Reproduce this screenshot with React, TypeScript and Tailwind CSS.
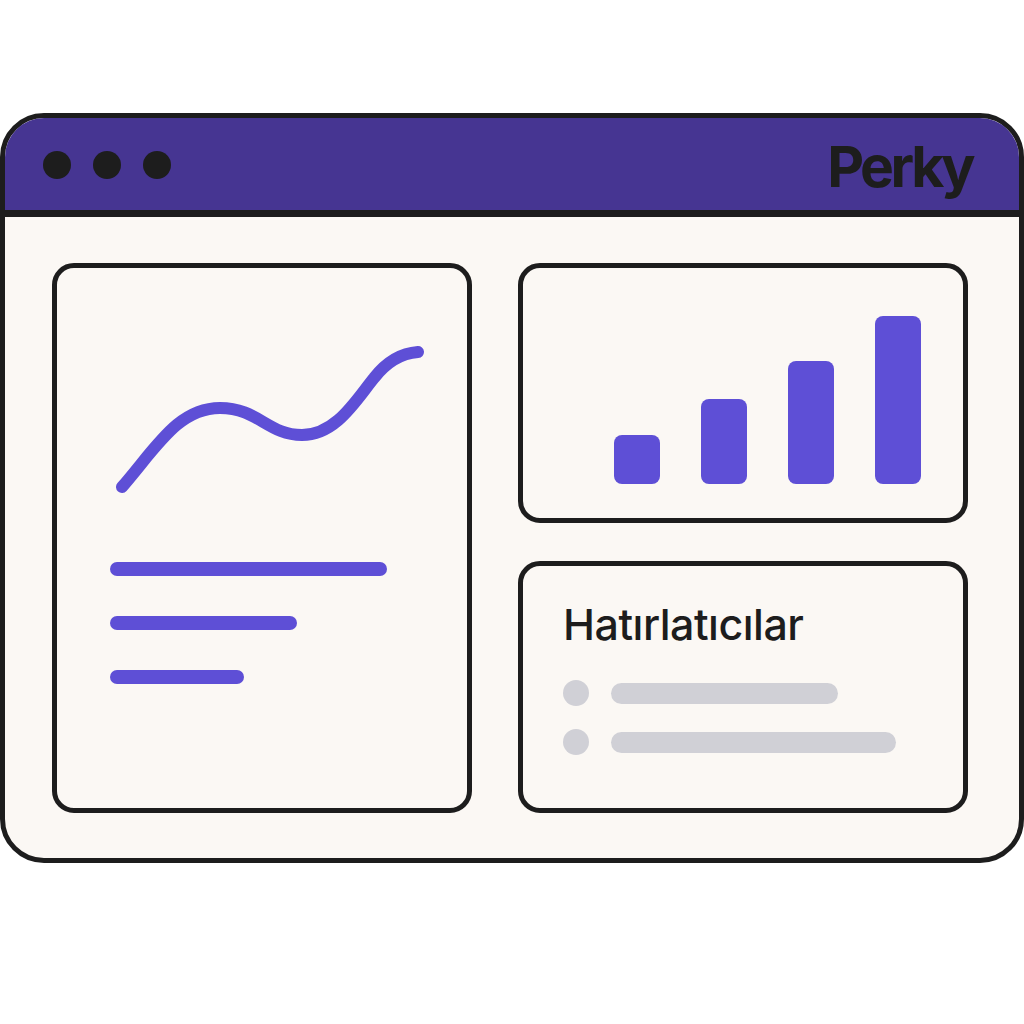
import React from "react";

export default function App() {
  return (
    <div className="w-[1024px] h-[1024px] bg-white pt-[113px]" style={{ fontFamily: "Inter, 'Noto Sans', sans-serif" }}>
      <div className="w-[1024px] h-[750px] border-[5px] border-[#1d1d1d] rounded-[44px] overflow-hidden bg-[#fbf8f4] flex flex-col">
        <div className="h-[99px] shrink-0 bg-[#463592] border-b-[7px] border-[#1d1d1d] flex items-center justify-between pl-[38px] pr-[47px]">
          <div className="flex items-center gap-[22px] mt-[2px]">
            <div className="w-[28px] h-[28px] rounded-full bg-[#1d1d1d]" />
            <div className="w-[28px] h-[28px] rounded-full bg-[#1d1d1d]" />
            <div className="w-[28px] h-[28px] rounded-full bg-[#1d1d1d]" />
          </div>
          <div className="text-[57px] font-bold text-[#1d1d1d] tracking-[-3.5px] leading-none mt-[4px]">Perky</div>
        </div>
        <div className="flex-1 flex gap-[46px] pl-[47px] pr-[51px] pt-[46px] pb-[45px]">
          <div className="w-[420px] border-[5px] border-[#1d1d1d] rounded-[22px] flex flex-col pl-[53px]">
            <svg width="324" height="160" viewBox="0 0 324 160" className="mt-[72px] -ml-[4px]" fill="none">
              <path
                d="M16 147 C 50 108, 72 68, 114 68 C 152 68, 162 95, 196 95 C 230 95, 250 60, 268 38 C 282 20, 298 13, 312 12"
                stroke="#5e4fd6"
                strokeWidth="12"
                strokeLinecap="round"
              />
            </svg>
            <div className="mt-[62px] flex flex-col gap-[40px]">
              <div className="w-[277px] h-[14px] rounded-full bg-[#5e4fd6]" />
              <div className="w-[187px] h-[14px] rounded-full bg-[#5e4fd6]" />
              <div className="w-[134px] h-[14px] rounded-full bg-[#5e4fd6]" />
            </div>
          </div>
          <div className="w-[450px] flex flex-col gap-[38px]">
            <div className="h-[260px] border-[5px] border-[#1d1d1d] rounded-[22px] flex items-end gap-[41px] pl-[91px] pb-[34px]">
              <div className="w-[46px] h-[49px] rounded-[8px] bg-[#5e4fd6]" />
              <div className="w-[46px] h-[85px] rounded-[8px] bg-[#5e4fd6]" />
              <div className="w-[46px] h-[123px] rounded-[8px] bg-[#5e4fd6]" />
              <div className="w-[46px] h-[168px] rounded-[8px] bg-[#5e4fd6]" />
            </div>
            <div className="flex-1 border-[5px] border-[#1d1d1d] rounded-[22px] flex flex-col pl-[40px] pt-[37px]">
              <div className="text-[43px] font-medium text-[#1d1d1d] leading-none tracking-[-0.5px]">Hatırlatıcılar</div>
              <div className="mt-[34px] flex flex-col gap-[23px]">
                <div className="flex items-center gap-[22px]">
                  <div className="w-[26px] h-[26px] rounded-full bg-[#d0d0d6]" />
                  <div className="w-[227px] h-[21px] rounded-full bg-[#d0d0d6]" />
                </div>
                <div className="flex items-center gap-[22px]">
                  <div className="w-[26px] h-[26px] rounded-full bg-[#d0d0d6]" />
                  <div className="w-[285px] h-[21px] rounded-full bg-[#d0d0d6]" />
                </div>
              </div>
            </div>
          </div>
        </div>
      </div>
    </div>
  );
}
